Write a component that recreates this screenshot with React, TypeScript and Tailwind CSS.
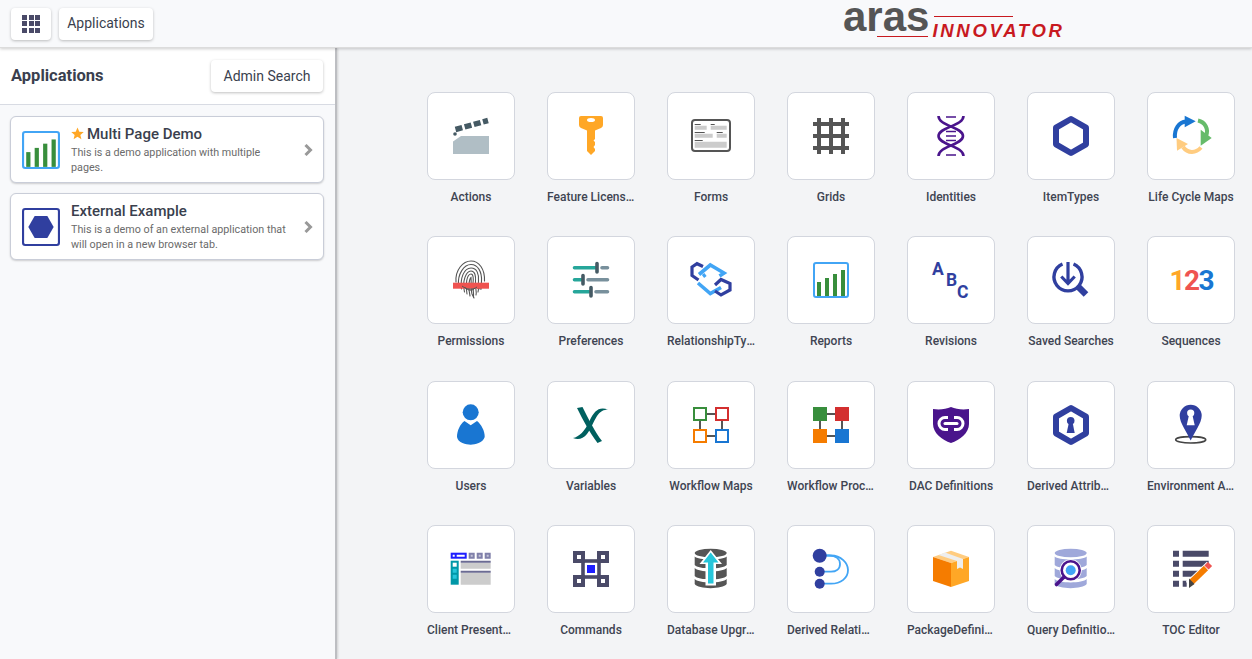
import React from 'react';

const ROBOTO = { fontFamily: 'Roboto, sans-serif' };
const INDIGO = '#303f9f';

// Chart icon is used by both the Reports tile and the Multi Page Demo card
const ChartIcon = () => (
  <>
    <rect x="1" y="1" width="34" height="34" rx="2" fill="#fff" stroke="#42a5f5" strokeWidth="2" />
    <rect x="4" y="20" width="4" height="14" fill="#388e3c" />
    <rect x="12" y="16" width="4" height="18" fill="#388e3c" />
    <rect x="20" y="12" width="4" height="22" fill="#388e3c" />
    <rect x="28" y="8" width="4" height="26" fill="#388e3c" />
  </>
);

const Hexagon = () => (
  <polygon points="18,1 33,9.7 33,26.3 18,35 3,26.3 3,9.7" fill="none" stroke={INDIGO} strokeWidth="6" strokeLinejoin="round" />
);

const WorkflowLines = () => (
  <g stroke="#555" strokeWidth="2">
    <path d="M14 7H22M14 29H22M7 14V22M29 14V22" />
  </g>
);

const ICONS: Record<string, React.ReactNode> = {
  Actions: (
    <>
      <polygon points="8,18 36,18 36,36 0,36 0,23.5" fill="#b0bec5" />
      <circle cx="2" cy="16" r="1.8" fill="#455a64" />
      <path d="M2.5 11.5L35 2.5" stroke="#455a64" strokeWidth="5.5" strokeDasharray="7 2.5" />
    </>
  ),
  'Feature Licenses': (
    <>
      <path d="M8 -2H28Q30 -2 30 0V7Q30 9 28 10L22 12.5V21L20.5 22.5L22 24V27L20.5 29L22 31V33L18 37L14 33V12.5L8 10Q6 9 6 7V0Q6 -2 8 -2Z" fill="#ffa726" />
      <ellipse cx="18" cy="2" rx="4" ry="2" fill="#fff" />
    </>
  ),
  Forms: (
    <>
      <rect x="-1" y="2" width="38" height="31" rx="3" fill="#fff" stroke="#555" strokeWidth="2" />
      <path d="M1.7 7.7h12v4h-12zM17.7 7.7h16v4h-16zM1.7 15.7h18v4h-18zM23.7 15.7h10v4h-10zM1.7 23.7h32v6h-32z" fill="#ccc" />
      <path d="M1.7 6h6v1h-6zM17.7 6h4v1h-4zM1.7 14h10v1h-10zM23.7 14h6v1h-6zM1.7 22h8v1h-8z" fill="#555" />
    </>
  ),
  Grids: (
    <path d="M4 0h4v36h-4zM16 0h4v36h-4zM28 0h4v36h-4zM0 4h36v4h-36zM0 16h36v4h-36zM0 28h36v4h-36z" fill="#555" />
  ),
  Identities: (
    <g fill="none" stroke="#4a148c" strokeWidth="2.6">
      <path d="M5.5 -2C5.5 8 30 9 30 18C30 27 5.5 28 5.5 38" />
      <path d="M30.5 -2C30.5 8 5.5 9 5.5 18C5.5 27 30.5 28 30.5 38" />
      <path d="M13 -1H23M13 13.5H23M13 18H23M13 22.5H23M13 37H23" strokeWidth="1.6" />
    </g>
  ),
  ItemTypes: <Hexagon />,
  'Life Cycle Maps': (
    <g fill="none" strokeWidth="4">
      <path d="M2 20C1 11 6 4 13 3.5" stroke="#1976d2" />
      <polygon points="11.7,-2.3 22.7,3.3 11.7,9.3" fill="#1976d2" />
      <path d="M25 2.5C32 4 36 11 33 18" stroke="#66bb6a" />
      <polygon points="27.7,11.7 38.7,20 27.7,27.7" fill="#66bb6a" />
      <path d="M28 29.5C23 35 15 36 10 29" stroke="#ffcc80" />
      <polygon points="3.5,20 4,32.7 15,26" fill="#ffcc80" />
    </g>
  ),
  Permissions: (
    <>
      <g fill="none" stroke="#555" strokeWidth="1.1" strokeLinecap="round">
        <path d="M3 20C2 8 10 -1 18 -1C26 -1 32 7 31.5 19" />
        <path d="M5.5 23C4.5 12 11 2.5 18 2.5C25 2.5 29 10 28.5 19C28 22 29 25 28 27" />
        <path d="M8.5 27C7 16 11 6 18 6C24 6 26 12 25.5 19C25 23 26 28 25 30" />
        <path d="M11.5 30C9 19 13 9 18 9C22 9 23 14 22.5 20C22 25 24 30 23 33" />
        <path d="M14 32C12 22 14 12 18 12C20.5 12 20.5 17 20 21C19.5 26 21 31 20.5 35" />
        <path d="M17 34C15 26 16 17 18 15.5C18.5 20 17.5 27 19 32L21 36" />
        <path d="M28 27C26 27 24 26 23 25" />
      </g>
      <rect x="0" y="20.7" width="36" height="6" fill="#ef5350" />
      <path d="M9 24C14 28 20 28 24 25M12 25.5C15 29 20 29 22 26" fill="none" stroke="#555" strokeWidth="1" />
    </>
  ),
  Preferences: (
    <g strokeLinecap="round" strokeWidth="3.6" fill="none">
      <path d="M1.5 5.8H23M1.5 17.8H8M1.5 29.8H16" stroke="#26a69a" />
      <path d="M29 5.8H34.5M15 17.8H34.5M23 29.8H34.5" stroke="#78909c" />
      <path d="M24 1.5V10M10 13.5V22M18 25.5V34" stroke="#455a64" />
    </g>
  ),
  RelationshipTypes: (
    <g fill="none">
      <path d="M6 12.5L17.3 3L31 11L26.5 14M5 21L17.3 31.5L28 25.5M10 14.5L12.5 12.5" stroke="#42a5f5" strokeWidth="3.6" />
      <path d="M10 4.5L4 1.7L-1 5V13.5L5.5 18" stroke={INDIGO} strokeWidth="3.2" />
      <path d="M22 23L28 17.5L37 21.5V28L28 33L22 29" stroke={INDIGO} strokeWidth="3.2" />
    </g>
  ),
  Reports: <ChartIcon />,
  Revisions: (
    <g fill={INDIGO} fontFamily="Roboto, sans-serif" fontWeight="700" fontSize="17.5">
      <text x="-1" y="12.7">A</text>
      <text x="13" y="24.3">B</text>
      <text x="24" y="36">C</text>
    </g>
  ),
  'Saved Searches': (
    <g fill="none" stroke={INDIGO}>
      <path d="M9.5 2A14 14 0 1 0 20.5 2" strokeWidth="3.4" />
      <path d="M15 0V21M8.3 14.5L15 21.5L21.7 14.5" strokeWidth="3.2" />
      <path d="M25 24.5L33 32.5" strokeWidth="6.5" />
    </g>
  ),
  Sequences: (
    <g fontFamily="Roboto, sans-serif" fontWeight="700" fontSize="28" letterSpacing="-1.6">
      <text x="-3.5" y="27.7">
        <tspan fill="#ffa726">1</tspan>
        <tspan fill="#ef5350">2</tspan>
        <tspan fill="#1976d2">3</tspan>
      </text>
    </g>
  ),
  Users: (
    <>
      <circle cx="17.7" cy="5.3" r="8" fill="#1976d2" />
      <path d="M11.5 14L17.7 18.3L24 14C28 17 32 24 31.7 30C30 36 22 37.7 17.7 37.7C13 37.7 5 36 4 30C4 24 7 17 11.5 14Z" fill="#1976d2" />
    </>
  ),
  Variables: (
    <g fill="#00605f">
      <path d="M4 1L9.5 0C15 11 22 25 29 34L24.5 36C17 26 10 13 4 1Z" />
      <path d="M35 2.5C26 -1 21 4 16.5 14C12 24 6 30 0 31C5 33 10 32 14 27C18 22 20 15 24 9C27 4.5 31 2.5 35 2.5Z" />
    </g>
  ),
  'Workflow Maps': (
    <>
      <WorkflowLines />
      <g fill="#fff" strokeWidth="2">
        <rect x="1" y="1" width="12" height="12" stroke="#388e3c" />
        <rect x="23" y="1" width="12" height="12" stroke="#d32f2f" />
        <rect x="1" y="23" width="12" height="12" stroke="#f57c00" />
        <rect x="23" y="23" width="12" height="12" stroke="#1976d2" />
      </g>
    </>
  ),
  'Workflow Processes': (
    <>
      <WorkflowLines />
      <rect x="0" y="0" width="14" height="14" fill="#388e3c" />
      <rect x="22" y="0" width="14" height="14" fill="#d32f2f" />
      <rect x="0" y="22" width="14" height="14" fill="#f57c00" />
      <rect x="22" y="22" width="14" height="14" fill="#1976d2" />
    </>
  ),
  'DAC Definitions': (
    <>
      <path d="M0 2C7 3 13 2 18 0C23 2 29 3 36 2V17C36 26 27 33 18 36C9 33 0 26 0 17Z" fill="#4a148c" />
      <path d="M15 10.5H12A6 6 0 0 0 12 22.5H15M21 10.5H24A6 6 0 0 1 24 22.5H21" fill="none" stroke="#fff" strokeWidth="3" />
      <path d="M12 16.5H24" stroke="#fff" strokeWidth="3" strokeLinecap="round" />
    </>
  ),
  'Derived Attributes': (
    <>
      <Hexagon />
      <circle cx="17.7" cy="13.7" r="3.8" fill={INDIGO} />
      <polygon points="16,15 19.5,15 21.7,26 13.7,26" fill={INDIGO} />
    </>
  ),
  'Environment Attributes': (
    <>
      <ellipse cx="17.7" cy="32.8" rx="15" ry="3.2" fill="none" stroke="#444" strokeWidth="1.6" />
      <path d="M6.7 8.7A11 11 0 0 1 28.7 8.7C28.7 16 21 26 17.7 33.5C14.4 26 6.7 16 6.7 8.7Z" fill={INDIGO} />
      <circle cx="17.7" cy="6" r="3.6" fill="#fff" />
      <polygon points="16,8 19.4,8 21.7,18.3 13.7,18.3" fill="#fff" />
    </>
  ),
  'Client Presentations': (
    <>
      <rect x="-2.3" y="1.7" width="16" height="6" fill="#1e1eff" />
      <path d="M-0.3 3.7h2v2h-2zM3.7 3.7h8v2h-8z" fill="#fff" />
      <path d="M15.7 1.7h6v6h-6zM23.7 1.7h6v6h-6zM31.7 1.7h6v6h-6z" fill="#8080aa" />
      <path d="M17.7 3.7h2v2h-2zM25.7 3.7h2v2h-2zM33.7 3.7h2v2h-2z" fill="#c5c5d8" />
      <rect x="-2.3" y="9.7" width="8" height="24" fill="#0097a7" />
      <rect x="-0.3" y="11.7" width="4" height="4" fill="#fff" />
      <path d="M-0.3 17.7h4v4h-4zM-0.3 23.7h4v4h-4z" fill="#26c6da" />
      <path d="M7.7 11.7h30v6h-30zM7.7 21.7h30v12h-30z" fill="#ccc" />
      <path d="M7.7 9.7h30v2h-30zM7.7 19.7h30v2h-30z" fill="#6b6b93" />
    </>
  ),
  Commands: (
    <>
      <rect x="10" y="10" width="16" height="16" fill="none" stroke="#4a4a68" strokeWidth="3.6" />
      <path d="M0 0h12v12h-12zM24 0h12v12h-12zM0 24h12v12h-12zM24 24h12v12h-12z" fill="#4a4a68" />
      <path d="M4 4h4v4h-4zM28 4h4v4h-4zM4 28h4v4h-4zM28 28h4v4h-4z" fill="#fff" />
      <rect x="14" y="14" width="8" height="8" fill="#1e1eff" />
    </>
  ),
  'Database Upgrades': (
    <>
      <ellipse cx="17.7" cy="2" rx="16" ry="4.3" fill="#555" />
      <path d="M1.7 5.5C5 9.5 30 9.5 33.7 5.5V14C30 18.5 5 18.5 1.7 14ZM1.7 17C5 21.5 30 21.5 33.7 17V25C30 29.5 5 29.5 1.7 25ZM1.7 28C5 32.5 30 32.5 33.7 28V33C30 38.5 5 38.5 1.7 33Z" fill="#555" />
      <polygon points="17.7,-1 29,13 23,13 23,34.5 12.5,34.5 12.5,13 6.5,13" fill="#fff" />
      <polygon points="17.7,1.5 25.5,11.5 20.5,11.5 20.5,32.5 15,32.5 15,11.5 10,11.5" fill="#26c6da" />
    </>
  ),
  'Derived Relationships': (
    <>
      <g fill="none" stroke="#42a5f5" strokeWidth="1.8">
        <path d="M8 4.5H18C28 4.5 35 12 35 19C35 27 28 32.7 18 32.7H8" />
        <path d="M10 4.5H16C23 4.5 27 8 27 13C27 18 23 20.7 18 20.7H8" />
      </g>
      <circle cx="6.7" cy="4.7" r="7" fill={INDIGO} />
      <circle cx="6.7" cy="20.7" r="5" fill={INDIGO} />
      <circle cx="6.7" cy="32.7" r="5" fill={INDIGO} />
    </>
  ),
  PackageDefinitions: (
    <>
      <polygon points="18,-0.3 36,6 18,12 0,6" fill="#ffcc80" />
      <polygon points="0,6 18,12 18,36 0,30" fill="#f57c00" />
      <polygon points="36,6 18,12 18,36 36,30" fill="#ffa726" />
      <polygon points="5.5,4 12,1.5 30,8 30,18 27,16.5 24,18 24,10" fill="#eeeeee" />
    </>
  ),
  'Query Definitions': (
    <>
      <ellipse cx="17.7" cy="2" rx="16" ry="4.3" fill="#9fa8da" />
      <path d="M1.7 5.5C5 9.5 30 9.5 33.7 5.5V14C30 18.5 5 18.5 1.7 14ZM1.7 17C5 21.5 30 21.5 33.7 17V25C30 29.5 5 29.5 1.7 25ZM1.7 28C5 32.5 30 32.5 33.7 28V33C30 38.5 5 38.5 1.7 33Z" fill="#9fa8da" />
      <circle cx="17.7" cy="19.3" r="11" fill="#fff" />
      <circle cx="17.7" cy="19.3" r="9" fill="none" stroke="#4a148c" strokeWidth="2.6" />
      <circle cx="17.7" cy="19.3" r="5" fill="#42a5f5" />
      <path d="M11 26L3.5 33.5" stroke="#4a148c" strokeWidth="3.6" strokeLinecap="round" />
    </>
  ),
  'TOC Editor': (
    <>
      <path d="M0 -0.3h6v6h-6zM0 9.7h6v6h-6zM0 19.7h6v6h-6zM0 29.7h6v6h-6z" fill="#4a4a68" />
      <path d="M9.7 -0.3h26v6h-26zM9.7 9.7h26v6h-26zM9.7 19.7h18v6h-18zM9.7 29.7h4v6h-4z" fill="#4a4a68" />
      <path d="M16 34L37 14" stroke="#fff" strokeWidth="9" />
      <path d="M18 31.5L33 17" stroke="#f57c00" strokeWidth="6" />
      <path d="M33.5 16.5L37 13" stroke="#ef5350" strokeWidth="6" />
      <polygon points="16,27.5 21.5,33 16,37" fill="#444" />
    </>
  ),
};

const APPS = [
  'Actions', 'Feature Licenses', 'Forms', 'Grids', 'Identities', 'ItemTypes', 'Life Cycle Maps',
  'Permissions', 'Preferences', 'RelationshipTypes', 'Reports', 'Revisions', 'Saved Searches', 'Sequences',
  'Users', 'Variables', 'Workflow Maps', 'Workflow Processes', 'DAC Definitions', 'Derived Attributes', 'Environment Attributes',
  'Client Presentations', 'Commands', 'Database Upgrades', 'Derived Relationships', 'PackageDefinitions', 'Query Definitions', 'TOC Editor',
];

const Tile = ({ name }: { name: string }) => (
  <div className="flex w-[88px] flex-col items-center">
    <div className="flex h-[88px] w-[88px] items-center justify-center rounded-lg border border-[#d3d6de] bg-white">
      <svg viewBox="0 0 36 36" className="h-9 w-9 overflow-visible">
        {ICONS[name]}
      </svg>
    </div>
    <div className="mt-[9px] w-full truncate text-center text-xs leading-4 font-medium text-[#404452]">{name}</div>
  </div>
);

const AppCard = ({ title, desc, star, icon }: { title: string; desc: string; star?: boolean; icon: React.ReactNode }) => (
  <div className="flex h-[67px] items-center rounded-md border border-[#c9cdd8] bg-white pr-[10px] pl-[11px] shadow-[0_1px_2px_rgba(0,0,0,0.18)]">
    <svg viewBox="0 0 36 36" className="h-[38px] w-[38px] shrink-0">
      {icon}
    </svg>
    <div className="ml-[11px] min-w-0 flex-1">
      <div className="flex items-center text-[15px] leading-[18px] font-medium text-[#3a3f4e]">
        {star && (
          <svg viewBox="0 0 24 24" className="mr-[3px] h-[13px] w-[13px] fill-[#ffa726]">
            <path d="M12 1l3.3 7.6 8.2.7-6.2 5.4 1.9 8L12 18l-7.2 4.7 1.9-8L.5 9.3l8.2-.7z" />
          </svg>
        )}
        {title}
      </div>
      <p className="mt-[2px] w-[222px] text-[10.75px] leading-[15px] text-[#6b6b6b]">{desc}</p>
    </div>
    <svg viewBox="0 0 9 12" className="h-3 w-[9px] shrink-0 text-[#999]">
      <path d="M1.5 1L6.5 6L1.5 11" fill="none" stroke="currentColor" strokeWidth="3" />
    </svg>
  </div>
);

export default function App() {
  return (
    <div className="flex h-screen flex-col overflow-hidden bg-[#f3f4f6]" style={ROBOTO}>
      <header className="z-10 flex h-12 shrink-0 items-center gap-2 border-b border-[#dcdcdc] bg-[#f8f9fb] pl-[11px] shadow-[0_1px_3px_rgba(0,0,0,0.2)]">
        <button className="flex h-8 w-10 items-center justify-center rounded bg-white shadow-[0_1px_3px_rgba(0,0,0,0.25)]">
          <span className="grid grid-cols-3 gap-[1.5px]">
            {Array.from({ length: 9 }).map((_, i) => (
              <span key={i} className="h-[5px] w-[5px] bg-[#4a4a68]" />
            ))}
          </span>
        </button>
        <button className="h-8 w-[94px] rounded bg-white pb-[2px] text-sm text-[#3a3f4e] shadow-[0_1px_3px_rgba(0,0,0,0.25)]">Applications</button>
        {/* Logo */}
        <div className="relative ml-[682px] flex h-12 items-start" style={{ fontFamily: '"Liberation Sans", sans-serif' }}>
          <span className="text-[42px] leading-[34px] font-bold text-[#555]">aras</span>
          <span className="mt-[21px] ml-[3px] text-[18.5px] leading-[19px] font-bold tracking-[2.7px] text-[#c8191f] italic">INNOVATOR</span>
          <span className="absolute top-[36px] left-[34px] h-[1.5px] w-[51px] bg-[#c8191f]" />
          <span className="absolute top-4 left-[91px] h-[1.5px] w-[79px] bg-[#c8191f]" />
        </div>
      </header>

      <div className="flex min-h-0 flex-1">
        <aside className="w-[337px] shrink-0 border-r-2 border-[#bdbec2] bg-[#f8f9fb] shadow-[1px_0_2px_rgba(0,0,0,0.15)]">
          <div className="flex h-[57px] items-center justify-between border-b border-[#d8dbe3] bg-white pr-3 pl-[11px]">
            <h1 className="text-[16.5px] font-bold text-[#3a3f4e]">Applications</h1>
            <button className="h-8 w-28 rounded bg-white pb-px text-sm text-[#3a3f4e] shadow-[0_1px_3px_rgba(0,0,0,0.25)]">Admin Search</button>
          </div>
          <div className="flex flex-col gap-[10px] pt-[11px] pr-[11px] pl-[10px]">
            <AppCard star title="Multi Page Demo" desc="This is a demo application with multiple pages." icon={<ChartIcon />} />
            <AppCard
              title="External Example"
              desc="This is a demo of an external application that will open in a new browser tab."
              icon={
                <>
                  <rect x="1" y="1" width="34" height="34" rx="2" fill="#fff" stroke={INDIGO} strokeWidth="2" />
                  <polygon points="12,7.5 24,7.5 30,18 24,28.5 12,28.5 6,18" fill={INDIGO} />
                </>
              }
            />
          </div>
        </aside>

        <main className="min-w-0 flex-1 pt-[44px] pl-[90px]">
          <div className="grid auto-rows-[144.33px] grid-cols-[repeat(7,88px)] gap-x-8">
            {APPS.map(name => (
              <Tile key={name} name={name} />
            ))}
          </div>
        </main>
      </div>
    </div>
  );
}
